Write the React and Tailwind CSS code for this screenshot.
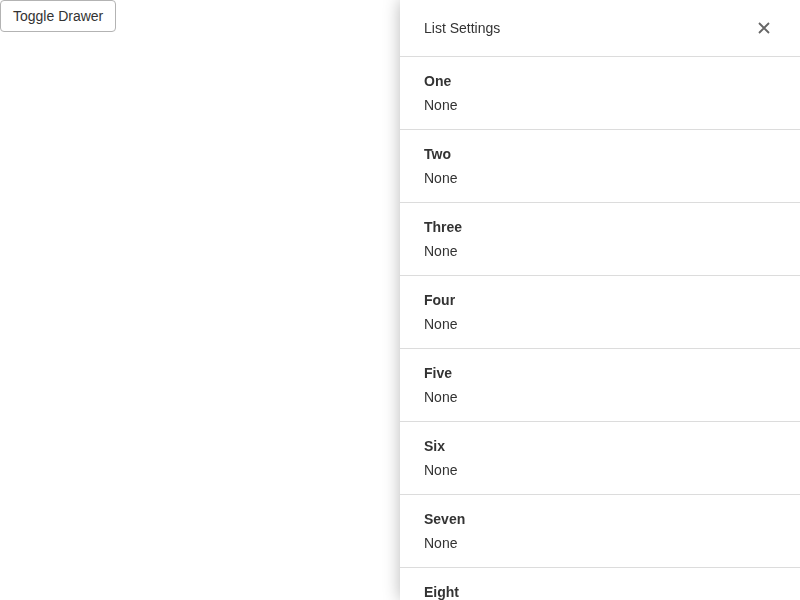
import React, { useState } from "react";

const items = ["One", "Two", "Three", "Four", "Five", "Six", "Seven", "Eight", "Nine", "Ten"];

const App = () => {
  const [open, setOpen] = useState(true);
  return (
    <div className="min-h-screen bg-white text-[#333] font-['Liberation_Sans',Arial,sans-serif]">
      <button
        onClick={() => setOpen(!open)}
        className="h-8 px-3 text-sm border border-[#b3b3b3] rounded-[4px] bg-white text-[#333]"
      >
        Toggle Drawer
      </button>

      {open && (
        <aside className="fixed top-0 right-0 h-screen w-[400px] bg-white overflow-hidden shadow-[0_0_16px_rgba(0,0,0,0.28)]">
          {/* header */}
          <div className="h-[57px] flex items-center justify-between pl-6 pr-[30px] border-b border-[#dcdcdc]">
            <span className="text-sm">List Settings</span>
            <button onClick={() => setOpen(false)} className="text-[#666]">
              <svg width="12" height="12" viewBox="0 0 12 12">
                <path d="M1 1L11 11M11 1L1 11" stroke="currentColor" strokeWidth="1.8" />
              </svg>
            </button>
          </div>
          {/* list */}
          {items.map((name) => (
            <div key={name} className="h-[73px] px-6 pt-3 border-b border-[#dcdcdc] text-sm leading-6">
              <div className="font-bold">{name}</div>
              <div>None</div>
            </div>
          ))}
        </aside>
      )}
    </div>
  );
};

export default App;
